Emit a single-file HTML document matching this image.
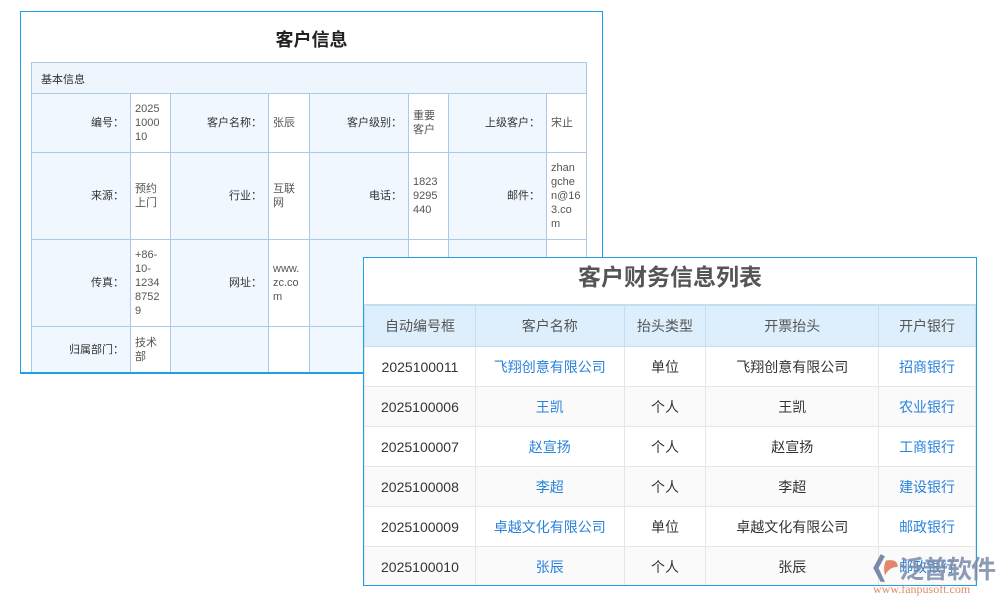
<!DOCTYPE html>
<html><head><meta charset="utf-8"><style>
body{margin:0;width:1000px;height:600px;background:#fff;position:relative;overflow:hidden;font-family:"Liberation Sans","Noto Sans CJK SC",sans-serif}
.p1{position:absolute;left:20px;top:11px;width:581px;height:361px;border:1px solid #1ea0e6;background:#fff;overflow:hidden}
.p1 h1{position:absolute;left:0;width:581px;top:14px;margin:0;text-align:center;font-size:18px;font-weight:bold;color:#222}
.c{position:absolute;border:1px solid #a9cbe8;box-sizing:border-box;font-size:11px;color:#555;line-height:14px}
.l{background:#f0f7fe;text-align:right;padding-right:6px;display:flex;align-items:center;justify-content:flex-end;color:#333}
.v{background:#fff;padding-left:4px;display:flex;align-items:center;word-break:break-all}
.p2{position:absolute;left:363px;top:257px;width:612px;height:327px;border:1px solid #1ea0e6;background:#fff;overflow:hidden}
.p2 h2{margin:0;height:46px;line-height:38px;text-align:center;font-size:23px;font-weight:bold;color:#555}
table{border-collapse:collapse;position:absolute;top:46px;left:0;width:612px}
td,th{border:1px solid #e6e6e6;height:39px;text-align:center;font-size:14px;color:#333;padding:0;font-weight:normal}
th{background:#ddeefc;color:#555;border-color:#c4def2;height:40px;border-top:2px solid #c4def2}
tr:nth-child(odd) td{background:#fafafa}
.b{color:#2a82dc}
.logo{position:absolute;left:868px;top:548px;width:132px;height:52px}
</style></head><body>
<div class="p1"><h1>客户信息</h1></div>
<div style="position:absolute;left:31px;top:62px;width:556px;height:32px;border:1px solid #a9cbe8;box-sizing:border-box;background:#eef5fd;font-size:11px;color:#333;padding:8px 0 0 9px">基本信息</div>
<div class="c l" style="left:31px;top:93px;width:100px;height:60px">编号：</div>
<div class="c v" style="left:130px;top:93px;width:41px;height:60px">2025<br>1000<br>10</div>
<div class="c l" style="left:170px;top:93px;width:99px;height:60px">客户名称：</div>
<div class="c v" style="left:268px;top:93px;width:42px;height:60px">张辰</div>
<div class="c l" style="left:309px;top:93px;width:100px;height:60px">客户级别：</div>
<div class="c v" style="left:408px;top:93px;width:41px;height:60px">重要<br>客户</div>
<div class="c l" style="left:448px;top:93px;width:99px;height:60px">上级客户：</div>
<div class="c v" style="left:546px;top:93px;width:41px;height:60px">宋止</div>
<div class="c l" style="left:31px;top:152px;width:100px;height:88px">来源：</div>
<div class="c v" style="left:130px;top:152px;width:41px;height:88px">预约<br>上门</div>
<div class="c l" style="left:170px;top:152px;width:99px;height:88px">行业：</div>
<div class="c v" style="left:268px;top:152px;width:42px;height:88px">互联<br>网</div>
<div class="c l" style="left:309px;top:152px;width:100px;height:88px">电话：</div>
<div class="c v" style="left:408px;top:152px;width:41px;height:88px">1823<br>9295<br>440</div>
<div class="c l" style="left:448px;top:152px;width:99px;height:88px">邮件：</div>
<div class="c v" style="left:546px;top:152px;width:41px;height:88px">zhan<br>gche<br>n@16<br>3.co<br>m</div>
<div class="c l" style="left:31px;top:239px;width:100px;height:88px">传真：</div>
<div class="c v" style="left:130px;top:239px;width:41px;height:88px">+86-<br>10-<br>1234<br>8752<br>9</div>
<div class="c l" style="left:170px;top:239px;width:99px;height:88px">网址：</div>
<div class="c v" style="left:268px;top:239px;width:42px;height:88px">www.<br>zc.co<br>m</div>
<div class="c l" style="left:309px;top:239px;width:100px;height:88px">外部</div>
<div class="c v" style="left:408px;top:239px;width:41px;height:88px"></div>
<div class="c l" style="left:448px;top:239px;width:99px;height:88px"></div>
<div class="c v" style="left:546px;top:239px;width:41px;height:88px"></div>
<div class="c l" style="left:31px;top:326px;width:100px;height:47px">归属部门：</div>
<div class="c v" style="left:130px;top:326px;width:41px;height:47px">技术<br>部</div>
<div class="c l" style="left:170px;top:326px;width:99px;height:47px"></div>
<div class="c v" style="left:268px;top:326px;width:42px;height:47px"></div>
<div class="c l" style="left:309px;top:326px;width:100px;height:47px"></div>
<div style="position:absolute;left:20px;top:372px;width:583px;height:1px;background:#1ea0e6"></div>
<div class="p2"><h2>客户财务信息列表</h2>
<table>
<colgroup><col style="width:111px"><col style="width:149px"><col style="width:82px"><col style="width:173px"><col style="width:97px"></colgroup>
<tr><th>自动编号框</th><th>客户名称</th><th>抬头类型</th><th>开票抬头</th><th>开户银行</th></tr>
<tr><td>2025100011</td><td class="b">飞翔创意有限公司</td><td>单位</td><td>飞翔创意有限公司</td><td class="b">招商银行</td></tr>
<tr><td>2025100006</td><td class="b">王凯</td><td>个人</td><td>王凯</td><td class="b">农业银行</td></tr>
<tr><td>2025100007</td><td class="b">赵宣扬</td><td>个人</td><td>赵宣扬</td><td class="b">工商银行</td></tr>
<tr><td>2025100008</td><td class="b">李超</td><td>个人</td><td>李超</td><td class="b">建设银行</td></tr>
<tr><td>2025100009</td><td class="b">卓越文化有限公司</td><td>单位</td><td>卓越文化有限公司</td><td class="b">邮政银行</td></tr>
<tr><td>2025100010</td><td class="b">张辰</td><td>个人</td><td>张辰</td><td class="b">邮政银行</td></tr>
</table></div>
<div class="logo">
<svg width="32" height="32" style="position:absolute;left:2px;top:4px" viewBox="0 0 30 30"><path d="M10 2 L3 15 L10 28 L14 28 L8 15 L14 4Z" fill="#7a8aa8"/><path d="M15 8 Q26 6 26 14 Q18 14 14 22 Q12 14 15 8Z" fill="#e0896a"/></svg>
<div style="position:absolute;left:31px;top:2px;font-size:25px;font-weight:bold;color:#7a8aa8;opacity:.85;letter-spacing:-1px;white-space:nowrap">泛普软件</div>
<div style="position:absolute;left:5px;top:34px;font-family:'Liberation Serif',serif;font-size:12px;color:#e0896a;white-space:nowrap">www.fanpusoft.com</div>
</div>
</body></html>
